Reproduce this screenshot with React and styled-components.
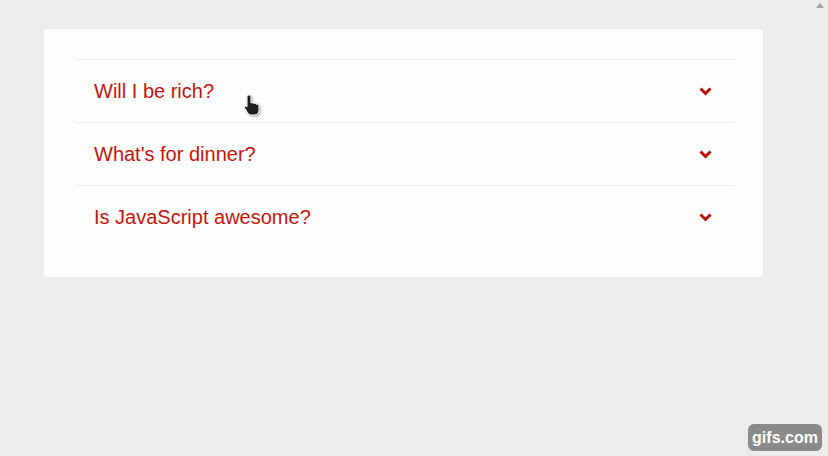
import React from 'react';
import styled, { createGlobalStyle } from 'styled-components';

const GlobalStyle = createGlobalStyle`
  html, body {
    margin: 0;
    padding: 0;
    background: #ececec;
    font-family: "Liberation Sans", Arial, sans-serif;
  }
`;

const Page = styled.div`
  position: relative;
  width: 828px;
  height: 456px;
  padding: 29px 0 0 44px;
  box-sizing: border-box;
`;

const Card = styled.div`
  width: 719px;
  height: 248px;
  box-sizing: border-box;
  background: #fdfdfd;
  border-radius: 4px;
  padding: 30px 28px 0 31px;
`;

const List = styled.ul`
  list-style: none;
  margin: 0;
  padding: 0;
`;

const Item = styled.li`
  display: flex;
  align-items: center;
  justify-content: space-between;
  height: 62px;
  border-top: 1px solid #ececec;
  padding: 0 23px 0 19px;
`;

const Question = styled.span`
  font-size: 20px;
  color: #c4150b;
`;

const Chevron = styled.svg`
  width: 13px;
  height: 9px;
  display: block;
`;

const Cursor = styled.svg`
  position: absolute;
  left: 243px;
  top: 94px;
  width: 22px;
  height: 22px;
  filter: drop-shadow(1px 1px 1px rgba(0, 0, 0, 0.35));
`;

const ScrollArrow = styled.div`
  position: absolute;
  right: 4px;
  top: 3px;
  width: 0;
  height: 0;
  border-left: 4px solid transparent;
  border-right: 4px solid transparent;
  border-bottom: 5px solid #a3a3a3;
`;

const Badge = styled.div`
  position: absolute;
  right: 6px;
  bottom: 5px;
  width: 74px;
  height: 27px;
  border-radius: 6px;
  background: #8a8a8a;
  color: #fff;
  font-weight: bold;
  font-size: 16px;
  display: flex;
  align-items: center;
  justify-content: center;
`;

const questions = ['Will I be rich?', "What's for dinner?", 'Is JavaScript awesome?'];

const App = () => (
  <Page>
    <GlobalStyle />
    <Card>
      <List>
        {questions.map((q) => (
          <Item key={q}>
            <Question>{q}</Question>
            <Chevron viewBox="0 0 13 9">
              <path d="M1.5 1.5 L6.5 6.5 L11.5 1.5" fill="none" stroke="#b8120a" strokeWidth="3" />
            </Chevron>
          </Item>
        ))}
      </List>
    </Card>
    <Cursor viewBox="0 0 22 22">
      <path
        d="M6 1 c1.2 0 2 .8 2 2 v6 c.8-.6 2.4-.4 2.8.6 c.8-.6 2.4-.3 2.7.8 c.9-.5 2.5 0 2.5 1.3 v4.3 c0 3-1.8 5-4.6 5 h-3 c-1.8 0-3-1-3.8-2.2 L1.6 14 c-.8-1.2.7-2.6 1.9-1.6 L4 13 V3 c0-1.2.8-2 2-2z"
        fill="#1e1e1e"
        stroke="#fff"
        strokeWidth="1"
      />
    </Cursor>
    <ScrollArrow />
    <Badge>gifs.com</Badge>
  </Page>
);

export default App;
